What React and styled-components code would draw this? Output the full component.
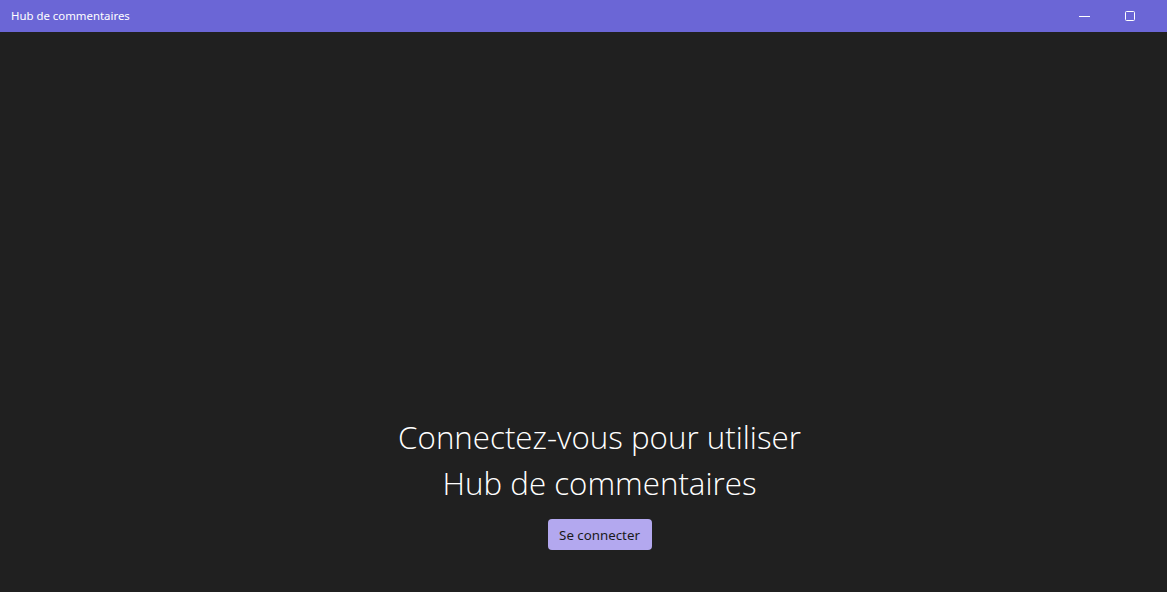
import React from "react";
import styled, { createGlobalStyle } from "styled-components";

const Global = createGlobalStyle`
  html, body { margin: 0; padding: 0; background: #202020; }
  body { font-family: "Segoe UI", "Open Sans", "Noto Sans", sans-serif; }
  #root { height: 592px; }
`;

const Window = styled.div`
  width: 1167px;
  height: 592px;
  display: flex;
  flex-direction: column;
  background: #202020;
  overflow: hidden;
`;

const TitleBar = styled.div`
  height: 32px;
  flex: 0 0 32px;
  background: #6b66d6;
  display: flex;
  align-items: center;
  justify-content: space-between;
`;

const Title = styled.span`
  padding-left: 11px;
  color: #ffffff;
  font-family: "Noto Sans", "Open Sans", sans-serif;
  font-size: 11.4px;
  margin-top: -1px;
`;

const Controls = styled.div`
  display: flex;
  height: 100%;
  padding-right: 15px;
`;

const CtrlButton = styled.div`
  width: 45px;
  height: 32px;
  display: flex;
  align-items: center;
  justify-content: center;
  color: #ffffff;
`;

const Content = styled.main`
  flex: 1;
  display: flex;
  flex-direction: column;
  align-items: center;
  justify-content: flex-end;
  padding-bottom: 42px;
  padding-left: 32px;
`;

const Heading = styled.h1`
  margin: 0;
  color: #ffffff;
  font-family: "Open Sans", sans-serif;
  font-weight: 300;
  font-size: 31.3px;
  line-height: 46px;
  text-align: center;
`;

const Button = styled.button`
  margin-top: 13px;
  width: 104px;
  height: 31px;
  border: none;
  border-radius: 4px;
  background: #b3a8ef;
  color: #1a1a1a;
  font-family: "Noto Sans", "Open Sans", sans-serif;
  font-size: 13.3px;
  padding: 0;
`;

export default function App() {
  return (
    <>
      <Global />
      <Window>
        <TitleBar>
          <Title>Hub de commentaires</Title>
          <Controls>
            <CtrlButton>
              <svg width="11" height="10" viewBox="0 0 11 10">
                <line x1="0" y1="5.5" x2="11" y2="5.5" stroke="#fff" strokeWidth="1" />
              </svg>
            </CtrlButton>
            <CtrlButton>
              <svg width="10" height="10" viewBox="0 0 10 10">
                <rect x="0.5" y="0.5" width="9" height="9" rx="1" fill="none" stroke="#fff" strokeWidth="1" />
              </svg>
            </CtrlButton>
          </Controls>
        </TitleBar>
        <Content>
          <Heading>
            Connectez-vous pour utiliser
            <br />
            Hub de commentaires
          </Heading>
          <Button>Se connecter</Button>
        </Content>
      </Window>
    </>
  );
}
